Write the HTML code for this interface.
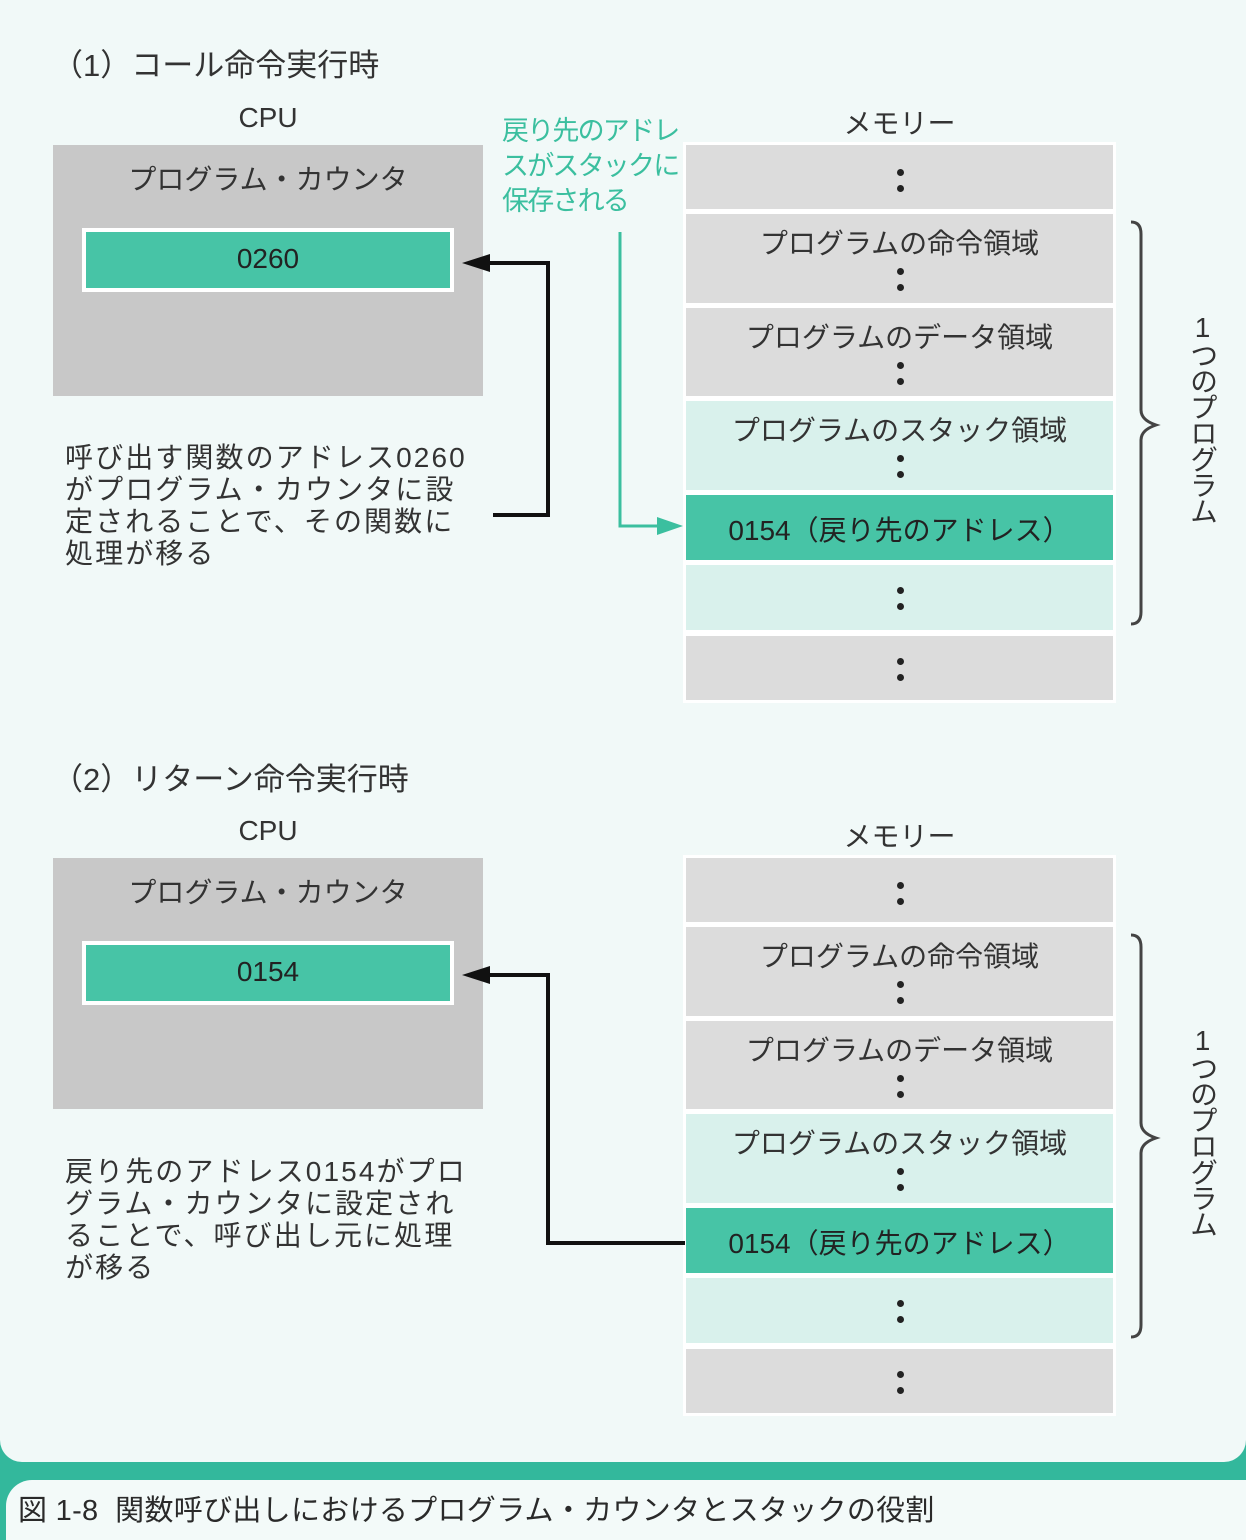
<!DOCTYPE html>
<html><head><meta charset="utf-8"><style>
*{margin:0;padding:0;box-sizing:border-box}
body{width:1246px;height:1532px;background:#33b89c;position:relative;overflow:hidden;font-family:"Liberation Sans","Noto Sans CJK JP",sans-serif;color:#333}
.panel{position:absolute;left:0;top:0;width:1246px;height:1462px;background:#f1f9f8;border-radius:0 0 22px 22px}
.cap{position:absolute;left:6px;top:1480px;width:1240px;height:60px;background:#f3faf9;border-radius:26px 0 0 0}
.cap span{position:absolute;left:12px;top:7px;font-size:29px;color:#2a2a2a;letter-spacing:0.3px;white-space:nowrap}
.sec{position:absolute;left:0;width:1246px;height:710px}
.a{position:absolute;white-space:nowrap}
.t{font-size:31px;left:52px;top:40px;color:#333}
.cpu{position:absolute;left:53px;top:145px;width:430px;height:251px;background:#c8c8c8}
.pc{position:absolute;left:82px;top:228px;width:372px;height:64px;background:#47c4a6;border:4px solid #fff;font-size:28px;text-align:center;line-height:54px;color:#222}
.lbl{font-size:28px;text-align:center;color:#333}
.desc{position:absolute;left:65px;font-size:28px;line-height:32px;letter-spacing:2.1px;color:#333;white-space:nowrap}
.mem{position:absolute;left:683px;top:142px;width:433px;height:561px;background:#fff}
.r{position:absolute;left:3px;width:427px;background:#dcdcdc;text-align:center;font-size:28px;color:#333}
.r .tx{position:absolute;left:0;right:0;top:8px}
.dots{position:absolute;left:50%;margin-left:-3px;width:7px;height:24px}
.dots:before,.dots:after{content:"";position:absolute;left:0;width:7px;height:7px;border-radius:50%;background:#222}
.dots:before{top:0}.dots:after{top:16px}
.lt{background:#d9f1ec}.gr{background:#47c4a6}
.vt{position:absolute;left:1183px;top:312px;width:34px;font-size:28px;line-height:30px;writing-mode:vertical-rl;text-orientation:upright;color:#333;letter-spacing:-2px}
.green{position:absolute;left:502px;top:114px;font-size:27px;line-height:35px;color:#3bbf9f;white-space:nowrap;letter-spacing:-1.8px}
</style></head><body>
<div class="panel"></div>

<div class="sec" style="top:0">
 <div class="a t">（1）コール命令実行時</div>
 <div class="a lbl" style="left:53px;width:430px;top:102px">CPU</div>
 <div class="cpu"></div>
 <div class="a lbl" style="left:53px;width:430px;top:158px">プログラム・カウンタ</div>
 <div class="pc">0260</div>
 <div class="desc" style="top:442px">呼び出す関数のアドレス0260<br>がプログラム・カウンタに設<br>定されることで、その関数に<br>処理が移る</div>
 <div class="green">戻り先のアドレ<br>スがスタックに<br>保存される</div>
 <div class="a lbl" style="left:683px;width:433px;top:102px">メモリー</div>
 <div class="mem">
  <div class="r" style="top:3px;height:64px"><div class="dots" style="top:24px"></div></div>
  <div class="r" style="top:72px;height:89px"><div class="tx">プログラムの命令領域</div><div class="dots" style="top:54px"></div></div>
  <div class="r" style="top:166px;height:88px"><div class="tx">プログラムのデータ領域</div><div class="dots" style="top:54px"></div></div>
  <div class="r lt" style="top:259px;height:89px"><div class="tx">プログラムのスタック領域</div><div class="dots" style="top:54px"></div></div>
  <div class="r gr" style="top:353px;height:65px"><div class="tx" style="top:14px;color:#222">0154（戻り先のアドレス）</div></div>
  <div class="r lt" style="top:423px;height:65px"><div class="dots" style="top:22px"></div></div>
  <div class="r" style="top:494px;height:64px"><div class="dots" style="top:22px"></div></div>
 </div>
 <svg class="a" style="left:0;top:0" width="1246" height="710">
  <path d="M493 515 H548 V263 H480" fill="none" stroke="#111" stroke-width="4"/>
  <path d="M462 263 L490 254 L490 272 Z" fill="#111"/>
  <path d="M620 232 V526 H662" fill="none" stroke="#3bbf9f" stroke-width="3"/>
  <path d="M683 526 L657 517 L657 535 Z" fill="#3bbf9f"/>
  <path d="M1131 222 Q1141 222 1141 234 V410 Q1141 420 1156 425 Q1141 430 1141 440 V612 Q1141 624 1131 624" fill="none" stroke="#444" stroke-width="3"/>
 </svg>
 <div class="vt">1つのプログラム</div>
</div>

<div class="sec" style="top:713px">
 <div class="a t" style="top:41px">（2）リターン命令実行時</div>
 <div class="a lbl" style="left:53px;width:430px;top:102px">CPU</div>
 <div class="cpu"></div>
 <div class="a lbl" style="left:53px;width:430px;top:158px">プログラム・カウンタ</div>
 <div class="pc">0154</div>
 <div class="desc" style="top:443px">戻り先のアドレス0154がプロ<br>グラム・カウンタに設定され<br>ることで、呼び出し元に処理<br>が移る</div>
 <div class="a lbl" style="left:683px;width:433px;top:102px">メモリー</div>
 <div class="mem">
  <div class="r" style="top:3px;height:64px"><div class="dots" style="top:24px"></div></div>
  <div class="r" style="top:72px;height:89px"><div class="tx">プログラムの命令領域</div><div class="dots" style="top:54px"></div></div>
  <div class="r" style="top:166px;height:88px"><div class="tx">プログラムのデータ領域</div><div class="dots" style="top:54px"></div></div>
  <div class="r lt" style="top:259px;height:89px"><div class="tx">プログラムのスタック領域</div><div class="dots" style="top:54px"></div></div>
  <div class="r gr" style="top:353px;height:65px"><div class="tx" style="top:14px;color:#222">0154（戻り先のアドレス）</div></div>
  <div class="r lt" style="top:423px;height:65px"><div class="dots" style="top:22px"></div></div>
  <div class="r" style="top:494px;height:64px"><div class="dots" style="top:22px"></div></div>
 </div>
 <svg class="a" style="left:0;top:0" width="1246" height="710">
  <path d="M685 530 H548 V262 H480" fill="none" stroke="#111" stroke-width="4"/>
  <path d="M462 262 L490 253 L490 271 Z" fill="#111"/>
  <path d="M1131 222 Q1141 222 1141 234 V410 Q1141 420 1156 425 Q1141 430 1141 440 V612 Q1141 624 1131 624" fill="none" stroke="#444" stroke-width="3"/>
 </svg>
 <div class="vt">1つのプログラム</div>
</div>

<div class="cap"><span>図 1-8&nbsp; 関数呼び出しにおけるプログラム・カウンタとスタックの役割</span></div>
</body></html>
